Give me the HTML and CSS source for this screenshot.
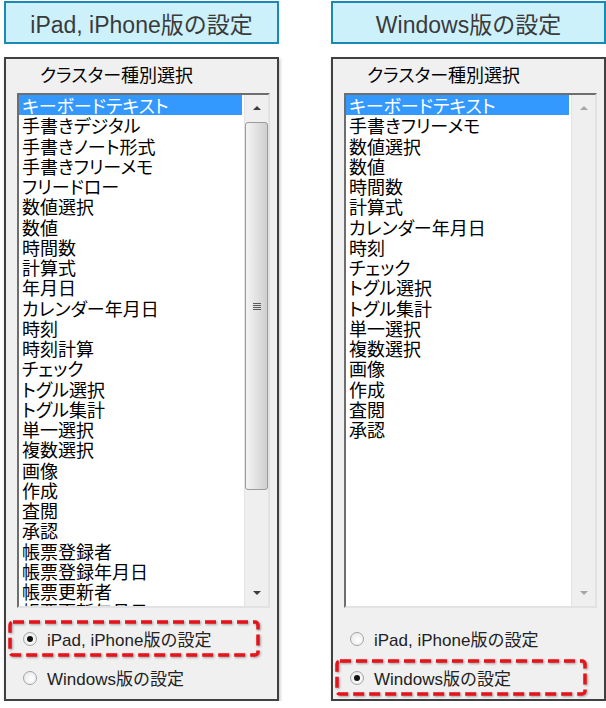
FILE: index.html
```html
<!DOCTYPE html>
<html lang="ja">
<head>
<meta charset="utf-8">
<title>クラスター種別選択</title>
<link rel="stylesheet" href="styles.css">
</head>
<body>
<div class="page">
  <section class="col">
    <div class="hdr">iPad, iPhone版の設定</div>
    <div class="panel">
      <div class="title">クラスター種別選択</div>
      <div class="listbox">
        <ul class="items">
          <li class="sel">キーボードテキスト</li>
          <li>手書きデジタル</li>
          <li>手書きノート形式</li>
          <li>手書きフリーメモ</li>
          <li>フリードロー</li>
          <li>数値選択</li>
          <li>数値</li>
          <li>時間数</li>
          <li>計算式</li>
          <li>年月日</li>
          <li>カレンダー年月日</li>
          <li>時刻</li>
          <li>時刻計算</li>
          <li>チェック</li>
          <li>トグル選択</li>
          <li>トグル集計</li>
          <li>単一選択</li>
          <li>複数選択</li>
          <li>画像</li>
          <li>作成</li>
          <li>査閲</li>
          <li>承認</li>
          <li>帳票登録者</li>
          <li>帳票登録年月日</li>
          <li>帳票更新者</li>
          <li>帳票更新年月日</li>
        </ul>
        <div class="sb">
          <div class="btn up"></div>
          <div class="thumb"><span class="grip"></span></div>
          <div class="track"></div>
          <div class="btn down"></div>
        </div>
      </div>
      <div class="radios">
        <div class="radio hl">
          <span class="dot on"></span>iPad, iPhone版の設定
          <svg class="dash" width="252" height="37" viewBox="0 0 252 37"><rect x="2" y="2" width="248" height="33" rx="3" fill="none" stroke="#e5141a" stroke-width="3.5" stroke-dasharray="11 5"/></svg>
        </div>
        <div class="radio"><span class="dot"></span>Windows版の設定</div>
      </div>
    </div>
  </section>

  <section class="col">
    <div class="hdr">Windows版の設定</div>
    <div class="panel">
      <div class="title">クラスター種別選択</div>
      <div class="listbox">
        <ul class="items">
          <li class="sel">キーボードテキスト</li>
          <li>手書きフリーメモ</li>
          <li>数値選択</li>
          <li>数値</li>
          <li>時間数</li>
          <li>計算式</li>
          <li>カレンダー年月日</li>
          <li>時刻</li>
          <li>チェック</li>
          <li>トグル選択</li>
          <li>トグル集計</li>
          <li>単一選択</li>
          <li>複数選択</li>
          <li>画像</li>
          <li>作成</li>
          <li>査閲</li>
          <li>承認</li>
        </ul>
        <div class="sb off">
          <div class="btn up"></div>
          <div class="track"></div>
          <div class="btn down"></div>
        </div>
      </div>
      <div class="radios">
        <div class="radio"><span class="dot"></span>iPad, iPhone版の設定</div>
        <div class="radio hl">
          <span class="dot on"></span>Windows版の設定
          <svg class="dash" width="252" height="37" viewBox="0 0 252 37"><rect x="2" y="2" width="248" height="33" rx="3" fill="none" stroke="#e5141a" stroke-width="3.5" stroke-dasharray="11 5"/></svg>
        </div>
      </div>
    </div>
  </section>
</div>
</body>
</html>
```
FILE: styles.css
```css
* { box-sizing: border-box; margin: 0; padding: 0; }
body {
  margin: 0;
  background: #fff;
  font-family: "Noto Sans CJK JP", sans-serif;
  color: #000;
}
.page {
  display: flex;
  gap: 52px;
  padding: 1px 0 0 4px;
}
.col {
  width: 275px;
  display: flex;
  flex-direction: column;
  gap: 13px;
}
.hdr {
  height: 43px;
  border: 2px solid #1a89b6;
  background: #cdf1fb;
  color: #3a3a3a;
  font-family: "Liberation Sans", "Noto Sans CJK JP", sans-serif;
  font-size: 23px;
  display: flex;
  align-items: center;
  justify-content: center;
}
.panel {
  height: 644px;
  border: 2px solid #404040;
  background: #f0f0f0;
  box-shadow: 1px 2px 3px rgba(0, 0, 0, 0.25);
  display: flex;
  flex-direction: column;
}
.title {
  margin: 5px 0 0 34px;
  font-size: 18px;
  line-height: 20px;
  font-feature-settings: "palt";
}
.listbox {
  margin: 9px 0 0 11px;
  width: 253px;
  height: 515px;
  border: 2px solid;
  border-color: #6e6e6e #e2e2e2 #e2e2e2 #6e6e6e;
  background: #fff;
  display: flex;
}
.items {
  flex: 1;
  list-style: none;
  overflow: hidden;
  font-size: 18px;
  line-height: 20.25px;
  font-feature-settings: "palt";
}
.items li {
  height: 20.25px;
  padding-left: 3px;
  white-space: nowrap;
}
.items li.sel {
  background: #3399ff;
  color: #fff;
  margin-right: 2px;
}
.sb {
  width: 24px;
  display: flex;
  flex-direction: column;
  background: #efefef;
  border-left: 1px solid #e4e4e4;
}
.btn {
  height: 26px;
  flex: none;
  display: flex;
  align-items: center;
  justify-content: center;
}
.btn::before {
  content: "";
  width: 0;
  height: 0;
  border-left: 4px solid transparent;
  border-right: 4px solid transparent;
}
.btn.up::before { border-bottom: 4px solid #3c3c3c; }
.btn.down::before { border-top: 4px solid #3c3c3c; }
.sb.off .btn.up::before { border-bottom-color: #a6a6a6; }
.sb.off .btn.down::before { border-top-color: #a6a6a6; }
.thumb {
  height: 368px;
  margin-top: 1px;
  flex: none;
  border: 1px solid #9b9b9b;
  border-radius: 3px;
  background: linear-gradient(to right, #f4f4f4, #e4e4e4 45%, #cfcfcf);
  display: flex;
  align-items: center;
  justify-content: center;
}
.grip {
  width: 8px;
  height: 7px;
  background: repeating-linear-gradient(to bottom, #5a5a5a 0 1px, transparent 1px 2px);
}
.track { flex: 1; }
.radios {
  margin: 12px 0 0 2px;
  display: flex;
  flex-direction: column;
  gap: 2px;
}
.radio {
  position: relative;
  width: 252px;
  height: 37px;
  display: flex;
  align-items: center;
  gap: 10px;
  padding-left: 15px;
  font-family: "Liberation Sans", "Noto Sans CJK JP", sans-serif;
  font-size: 17px;
  color: #222;
}
.dot {
  width: 14px;
  height: 14px;
  border-radius: 50%;
  border: 1px solid #a3a3a3;
  background: radial-gradient(circle at 60% 60%, #ffffff, #e4e4e4);
  display: flex;
  align-items: center;
  justify-content: center;
}
.dot.on::after {
  content: "";
  width: 6px;
  height: 6px;
  border-radius: 50%;
  background: #111;
}
.dash {
  position: absolute;
  left: 0;
  top: 0;
  filter: drop-shadow(1px 1px 1px rgba(0, 0, 0, 0.35));
}
```
